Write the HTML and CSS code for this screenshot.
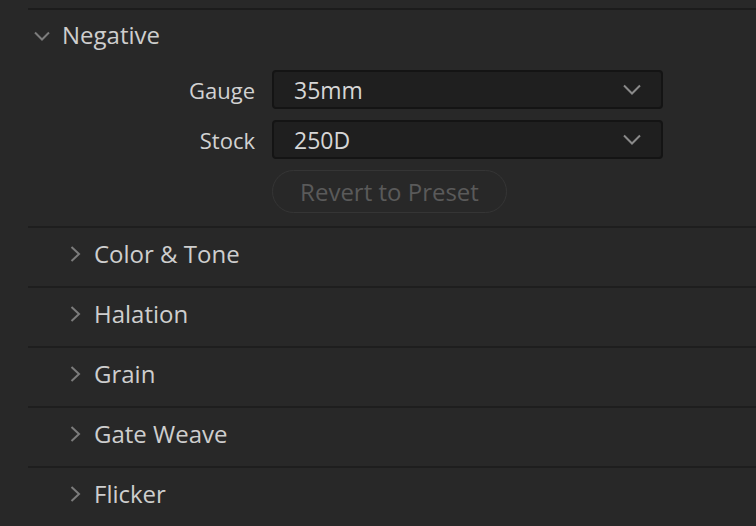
FILE: index.html
```html
<!DOCTYPE html>
<html lang="en">
<head>
    <meta charset="UTF-8">
    <title>Film Look</title>
    <link rel="stylesheet" href="styles.css">
</head>
<body>
    <div class="panel">
        <div class="top-line"></div>
        <div class="section-head">
            <svg class="chev-down" width="16" height="10" viewBox="0 0 16 10"><path d="M1 1.5 L8 8.5 L15 1.5" fill="none" stroke="#7c7c7c" stroke-width="2"/></svg>
            <span>Negative</span>
        </div>
        <div class="form">
            <label>Gauge</label>
            <div class="select">
                <span>35mm</span>
                <svg width="18" height="11" viewBox="0 0 18 11"><path d="M1 1.5 L9 9.5 L17 1.5" fill="none" stroke="#8a8a8a" stroke-width="2"/></svg>
            </div>
            <label>Stock</label>
            <div class="select">
                <span>250D</span>
                <svg width="18" height="11" viewBox="0 0 18 11"><path d="M1 1.5 L9 9.5 L17 1.5" fill="none" stroke="#8a8a8a" stroke-width="2"/></svg>
            </div>
            <div></div>
            <div class="btn-wrap"><button class="revert">Revert to Preset</button></div>
        </div>
        <div class="sub-row">
            <svg class="chev-right" width="11" height="16" viewBox="0 0 11 16"><path d="M1.5 1 L9 8 L1.5 15" fill="none" stroke="#7c7c7c" stroke-width="2"/></svg>
            <span>Color &amp; Tone</span>
        </div>
        <div class="sub-row">
            <svg class="chev-right" width="11" height="16" viewBox="0 0 11 16"><path d="M1.5 1 L9 8 L1.5 15" fill="none" stroke="#7c7c7c" stroke-width="2"/></svg>
            <span>Halation</span>
        </div>
        <div class="sub-row">
            <svg class="chev-right" width="11" height="16" viewBox="0 0 11 16"><path d="M1.5 1 L9 8 L1.5 15" fill="none" stroke="#7c7c7c" stroke-width="2"/></svg>
            <span>Grain</span>
        </div>
        <div class="sub-row">
            <svg class="chev-right" width="11" height="16" viewBox="0 0 11 16"><path d="M1.5 1 L9 8 L1.5 15" fill="none" stroke="#7c7c7c" stroke-width="2"/></svg>
            <span>Gate Weave</span>
        </div>
        <div class="sub-row">
            <svg class="chev-right" width="11" height="16" viewBox="0 0 11 16"><path d="M1.5 1 L9 8 L1.5 15" fill="none" stroke="#7c7c7c" stroke-width="2"/></svg>
            <span>Flicker</span>
        </div>
    </div>
</body>
</html>
```

FILE: styles.css
```css
body, html {
    margin: 0;
    padding: 0;
    background-color: #282828;
    font-family: "Open Sans", "Noto Sans", sans-serif;
    color: #cecece;
    overflow: hidden;
}

.panel {
    padding-left: 28px;
}

.top-line {
    margin-top: 8px;
    height: 2px;
    background-color: #1c1c1c;
}

.section-head {
    height: 52px;
    box-sizing: border-box;
    padding-bottom: 2px;
    display: flex;
    align-items: center;
    font-size: 24px;
    line-height: 1;
}

.chev-down {
    margin-left: 6px;
    margin-right: 12px;
    margin-top: 2px;
}

.form {
    display: grid;
    grid-template-columns: 227px 391px;
    column-gap: 17px;
    row-gap: 11px;
    padding-top: 8px;
    padding-bottom: 13px;
    align-items: center;
}

.form label {
    text-align: right;
    font-size: 22px;
    color: #d2d2d2;
}

.select {
    height: 35px;
    border: 2px solid #141414;
    border-radius: 4px;
    background-color: #1f1f1f;
    display: flex;
    align-items: center;
    justify-content: space-between;
    padding: 0 20px 0 20px;
    font-size: 23px;
    color: #d6d6d6;
}

.btn-wrap {
    display: flex;
}

.revert {
    height: 43px;
    width: 235px;
    border: 1px solid #353535;
    border-radius: 22px;
    background: transparent;
    color: #5a5a5a;
    font-family: "Open Sans", "Noto Sans", sans-serif;
    font-size: 24px;
    line-height: 1;
    padding: 0;
}

.sub-row {
    height: 58px;
    box-sizing: content-box;
    border-top: 2px solid #1e1e1e;
    display: flex;
    align-items: center;
    font-size: 24px;
    line-height: 1;
}

.sub-row span {
    margin-bottom: 6px;
}

.chev-right {
    margin-left: 42px;
    margin-right: 13px;
    margin-bottom: 6px;
}
```
